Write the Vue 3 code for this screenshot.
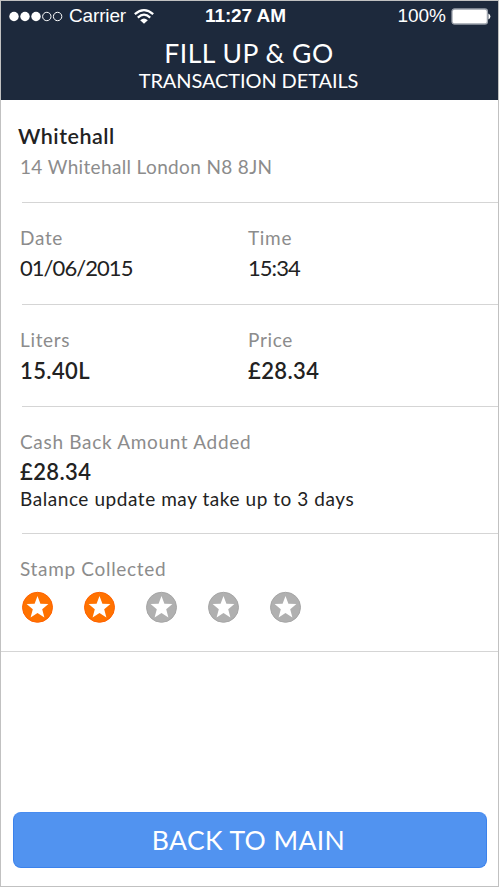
<script setup>
const stamps = [true, true, false, false, false]
const details = [
  { strong: false, items: [
    { id: 'date', label: 'Date', value: '01/06/2015' },
    { id: 'time', label: 'Time', value: '15:34' },
  ] },
  { strong: true, items: [
    { id: 'liters', label: 'Liters', value: '15.40L' },
    { id: 'price', label: 'Price', value: '£28.34' },
  ] },
]
</script>

<template>
  <div class="screen">
    <header class="header">
      <div class="status">
        <div class="status-left">
          <svg class="signal" width="54" height="11" viewBox="0 0 54 11">
            <circle cx="5" cy="5.5" r="4.7" fill="#fff" />
            <circle cx="16" cy="5.5" r="4.7" fill="#fff" />
            <circle cx="27" cy="5.5" r="4.7" fill="#fff" />
            <circle cx="37.8" cy="5.5" r="4.2" fill="none" stroke="#fff" />
            <circle cx="48.6" cy="5.5" r="4.2" fill="none" stroke="#fff" />
          </svg>
          <span class="carrier">Carrier</span>
          <svg class="wifi" width="20" height="15" viewBox="0 0 20 15">
            <path d="M0.8 5.2Q10 -2.8 19.2 5.2" fill="none" stroke="#fff" stroke-width="2.2" />
            <path d="M3.8 8.6Q10 2.8 16.2 8.6" fill="none" stroke="#fff" stroke-width="2.2" />
            <path d="M6.2 11.2Q10 7.6 13.8 11.2L10 14.8Z" fill="#fff" />
          </svg>
        </div>
        <div class="clock">11:27 AM</div>
        <div class="status-right">
          <span class="percent">100%</span>
          <svg class="battery" width="40" height="17" viewBox="0 0 40 17">
            <rect x="1" y="1" width="35.4" height="15" rx="2.6" fill="#fff" stroke="#9ba1ab" stroke-width="1.3" />
            <path d="M37.4 5.6Q39.4 6.4 39.4 8.5Q39.4 10.6 37.4 11.4Z" fill="#fff" />
          </svg>
        </div>
      </div>
      <h1 class="title">FILL UP &amp; GO</h1>
      <h2 class="subtitle">TRANSACTION DETAILS</h2>
    </header>

    <main class="content">
      <section class="section place">
        <div class="name">Whitehall</div>
        <div class="label address">14 Whitehall London N8 8JN</div>
      </section>

      <section v-for="(row, i) in details" :key="i" class="section columns">
        <div v-for="item in row.items" :key="item.id" class="cell">
          <div class="label">{{ item.label }}</div>
          <div class="value" :class="{ strong: row.strong }">{{ item.value }}</div>
        </div>
      </section>

      <section class="section cashback">
        <div class="label">Cash Back Amount Added</div>
        <div class="value strong">£28.34</div>
        <div class="note">Balance update may take up to 3 days</div>
      </section>

      <section class="section stamps-section">
        <div class="label">Stamp Collected</div>
        <div class="stamps">
          <svg v-for="(on, i) in stamps" :key="i" class="stamp" :class="{ on }" viewBox="0 0 32 32">
            <circle class="disc" cx="16.5" cy="16.3" r="15" />
            <path class="star" d="M16.5 5L19.4 12.7L27.4 13.1L21.2 18.2L23.4 26.6L16.5 22L9.6 26.6L11.8 18.2L5.6 13.1L13.6 12.7Z" />
          </svg>
        </div>
      </section>
    </main>

    <footer class="footer">
      <button class="back" type="button">BACK TO MAIN</button>
    </footer>
  </div>
</template>

<style>
body { margin: 0; background: #fff; }
</style>

<style scoped>
.screen {
  box-sizing: border-box;
  width: 499px;
  height: 887px;
  border: 1px solid #c1c1c1;
  background: #fff;
  font-family: Lato, "Liberation Sans", sans-serif;
  display: flex;
  flex-direction: column;
}
.header {
  box-sizing: border-box;
  height: 99px;
  flex: none;
  background: #1d293c;
  color: #fff;
  text-align: center;
}
.status {
  display: grid;
  grid-template-columns: 204px 82px 1fr;
  align-items: center;
  height: 30px;
  padding: 0 7px 0 0;
  font-family: "Liberation Sans", sans-serif;
  font-size: 19px;
  line-height: 30px;
  white-space: nowrap;
}
.status-left, .status-right { display: flex; align-items: center; }
.status-left { padding-left: 8px; }
.status-right { justify-content: flex-end; gap: 5px; }
.carrier { margin-left: 6px; letter-spacing: -.15px; }
.wifi { margin-left: 8px; }
.clock { font-weight: 700; letter-spacing: -0.1px; text-align: left; }
.title, .subtitle { margin: 0; font-weight: 400; white-space: nowrap; }
.title { font-size: 26.5px; line-height: 30px; padding: 7px 1px 0 0; letter-spacing: .5px; }
.subtitle { font-size: 20px; line-height: 25px; letter-spacing: -.1px; padding-right: 2px; }
.section {
  box-sizing: border-box;
  height: 102px;
  padding: 20px 0 0 19px;
  background: linear-gradient(#d5d5d5, #d5d5d5) 21px 100% / 100% 1px no-repeat;
  white-space: nowrap;
}
.place { height: 103px; padding-top: 21px; }
.name {
  margin-left: -2px;
  color: #222;
  font-size: 21.5px;
  font-weight: 600;
  line-height: 30px;
  letter-spacing: .5px;
}
.label { color: #8c8c8c; font-size: 19px; line-height: 30px; letter-spacing: .68px; font-weight: 400; }
.address { line-height: 31px; letter-spacing: .35px; }
.columns { display: grid; grid-template-columns: 228px 1fr; }
.value { color: #222; font-size: 22px; line-height: 30px; letter-spacing: -.95px; }
.strong { font-weight: 600; letter-spacing: .4px; }
.columns .strong { line-height: 31px; }
.cashback { height: 127px; }
.note { color: #222; font-size: 19px; line-height: 23px; letter-spacing: .56px; }
.stamps-section { height: 118px; background-position: 0 100%; }
.stamps { display: flex; gap: 30px; padding: 7px 0 0 1px; }
.stamp { width: 32px; height: 32px; flex: none; }
.disc { fill: #b0b0b0; stroke: #a6a6a6; }
.star { fill: #fff; }
.on .disc { fill: #ff7200; stroke: #ff6200; }
.footer { margin-top: auto; padding: 0 11.5px 18px; }
.back {
  display: block;
  width: 100%;
  height: 56px;
  padding: 0 2px 0 0;
  border: 1px solid #3b82ec;
  border-top-color: #488cf0;
  border-radius: 8px;
  background: #5193f0;
  color: #fff;
  font: 400 26.5px/54px Lato, "Liberation Sans", sans-serif;
  letter-spacing: .4px;
  text-align: center;
}
</style>
